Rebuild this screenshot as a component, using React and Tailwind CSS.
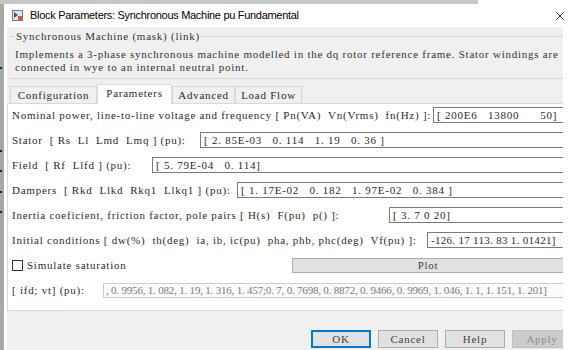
const serif = "font-['Liberation_Serif','DejaVu_Serif',serif] text-[11px] tracking-[0.75px]";

const rows = [
  {
    label: "Nominal power, line-to-line voltage and frequency [ Pn(VA)  Vn(Vrms)  fn(Hz) ]:",
    w: "w-[421px]",
    value: "[ 200E6   13800      50]",
  },
  {
    label: "Stator  [ Rs  Ll  Lmd  Lmq ] (pu):",
    w: "w-[188px]",
    value: "[ 2. 85E-03   0. 114   1. 19   0. 36 ]",
  },
  {
    label: "Field  [ Rf  Llfd ] (pu):",
    w: "w-[140px]",
    value: "[ 5. 79E-04   0. 114]",
  },
  {
    label: "Dampers  [ Rkd  Llkd  Rkq1  Llkq1 ] (pu):",
    w: "w-[225px]",
    value: "[ 1. 17E-02   0. 182   1. 97E-02   0. 384 ]",
  },
  {
    label: "Inertia coeficient, friction factor, pole pairs [ H(s)  F(pu)  p() ]:",
    w: "w-[377px]",
    value: "[ 3. 7 0 20]",
  },
  {
    label: "Initial conditions [ dw(%)  th(deg)  ia, ib, ic(pu)  pha, phb, phc(deg)  Vf(pu) ]:",
    w: "w-[415px]",
    value: "-126. 17 113. 83 1. 01421]",
    tight: true,
  },
];

const tabs = [
  { name: "Configuration", w: "w-[87px]" },
  { name: "Parameters", w: "w-[75px]", active: true },
  { name: "Advanced", w: "w-[63px]" },
  { name: "Load Flow", w: "w-[67px]" },
];

function BlockIcon() {
  return (
    <svg width="11" height="11" viewBox="0 0 11 11">
      <rect x="0.5" y="0.5" width="10" height="10" fill="#d8e8f6" stroke="#6b7b8c" />
      <path d="M2 2 L6 5 L2 8 Z" fill="#3a5a80" />
      <rect x="6" y="6" width="4" height="4" fill="#e0502a" />
    </svg>
  );
}

function Row({ label, w, value, tight }) {
  return (
    <div className="flex h-[16px] items-center">
      <div className={`${w} shrink-0 whitespace-pre text-[#2a2a2a]`}>{label}</div>
      <div
        className={`flex h-[16px] flex-1 items-center whitespace-pre border border-[#7a7a7a] bg-white px-[3px] text-[#2a2a2a] ${
          tight ? "tracking-[0.3px]" : ""
        }`}
      >
        {value}
      </div>
    </div>
  );
}

export default function App() {
  return (
    <div className="h-[350px] w-[575px] overflow-hidden bg-white">
      {/* screen backdrop strip */}
      <div className="h-[4px] w-[478px] bg-[#c6c6c6]" />
      <div className="flex h-[346px]">
        <div className="flex w-[4px] shrink-0 flex-col bg-[#a8a8a8]">
          <div className="mt-[63px] h-[2px] w-[2px] bg-[#222]" />
          <div className="mt-[81px] h-[2px] w-[2px] bg-[#222]" />
          <div className="mt-[18px] h-[2px] w-[2px] bg-[#222]" />
          <div className="mt-[19px] h-[2px] w-[2px] bg-[#222]" />
          <div className="mt-[18px] h-[2px] w-[2px] bg-[#222]" />
        </div>

        <div className="flex flex-1 flex-col">
          {/* title bar */}
          <div className="flex h-[23px] items-center bg-white pl-[8px]">
            <BlockIcon />
            <span className="ml-[7px] font-['Liberation_Sans',sans-serif] text-[11px] tracking-[-0.3px] text-black">
              Block Parameters: Synchronous Machine pu Fundamental
            </span>
            <svg className="ml-auto mr-[11px]" width="8" height="8" viewBox="0 0 8 8">
              <path d="M0.5 0.5 L7.5 7.5 M7.5 0.5 L0.5 7.5" stroke="#333" strokeWidth="1" />
            </svg>
          </div>

          <div className="flex flex-1">
            <div className="w-[3px] shrink-0 bg-white" />
            <div className={`w-[556px] shrink-0 overflow-hidden bg-[#f0f0f0] ${serif}`}>
              <div className="w-[575px]">
                <fieldset className="ml-[3px] mt-[3px] border-y border-[#d5d5d5] pb-[4px] pl-[5px] pt-[5px]">
                  <legend className="px-[1px] leading-[13px] text-[#333]">
                    Synchronous Machine (mask) (link)
                  </legend>
                  <p className="leading-[13px] text-[#333]">
                    Implements a 3-phase synchronous machine modelled in the dq rotor reference frame. Stator windings are
                    <br />
                    connected in wye to an internal neutral point.
                  </p>
                </fieldset>

                <div className="ml-[3px] mt-[5px] flex items-end">
                  {tabs.map((t) =>
                    t.active ? (
                      <div
                        key={t.name}
                        className={`${t.w} relative z-10 -mb-[1px] flex h-[20px] items-center justify-center border-x border-t border-[#d9d9d9] bg-white pb-[2px] text-[#2a2a2a]`}
                      >
                        {t.name}
                      </div>
                    ) : (
                      <div
                        key={t.name}
                        className={`${t.w} flex h-[17px] items-center justify-center border-x border-t border-[#d9d9d9] bg-[#f0f0f0] text-[#2a2a2a]`}
                      >
                        {t.name}
                      </div>
                    )
                  )}
                </div>

                <div className="flex h-[208px] flex-col gap-[9px] border border-[#d9d9d9] bg-white pl-[4px] pt-[3px]">
                  {rows.map((r) => (
                    <Row key={r.label} {...r} />
                  ))}

                  <div className="flex h-[16px] items-center">
                    <div className="flex w-[280px] shrink-0 items-center">
                      <div className="h-[11px] w-[11px] border border-[#333] bg-white" />
                      <span className="ml-[4px] text-[#2a2a2a]">Simulate saturation</span>
                    </div>
                    <div className="flex h-[15px] w-[272px] items-center justify-center border border-[#adadad] bg-[#e1e1e1] text-[#444]">
                      Plot
                    </div>
                  </div>

                  <div className="flex h-[16px] items-center">
                    <div className="w-[91px] shrink-0 whitespace-pre text-[#2a2a2a]">[ ifd; vt] (pu):</div>
                    <div className="flex h-[15px] w-[462px] shrink-0 items-center overflow-hidden whitespace-pre border border-[#cccccc] bg-[#fbfbfb] px-[2px] tracking-[-0.2px] text-[#7a7a7a]">
                      , 0. 9956, 1. 082, 1. 19, 1. 316, 1. 457;0. 7, 0. 7698, 0. 8872, 0. 9466, 0. 9969, 1. 046, 1. 1, 1. 151, 1. 201]
                    </div>
                  </div>
                </div>

                <div className="mt-[19px] flex justify-end gap-[7px] pr-[10px]">
                  <button className="h-[18px] w-[60px] border border-[#0078d7] bg-[#e1e1e1] font-normal text-[#444] outline outline-1 -outline-offset-2 outline-[#0078d7]">
                    OK
                  </button>
                  <button className="h-[18px] w-[60px] border border-[#adadad] bg-[#e1e1e1] font-normal text-[#444]">
                    Cancel
                  </button>
                  <button className="h-[18px] w-[60px] border border-[#adadad] bg-[#e1e1e1] font-normal text-[#444]">
                    Help
                  </button>
                  <button className="h-[18px] w-[60px] border border-[#bfbfbf] bg-[#cccccc] font-normal text-[#8a8a8a]">
                    Apply
                  </button>
                </div>
              </div>
            </div>
          </div>
        </div>
      </div>
    </div>
  );
}
